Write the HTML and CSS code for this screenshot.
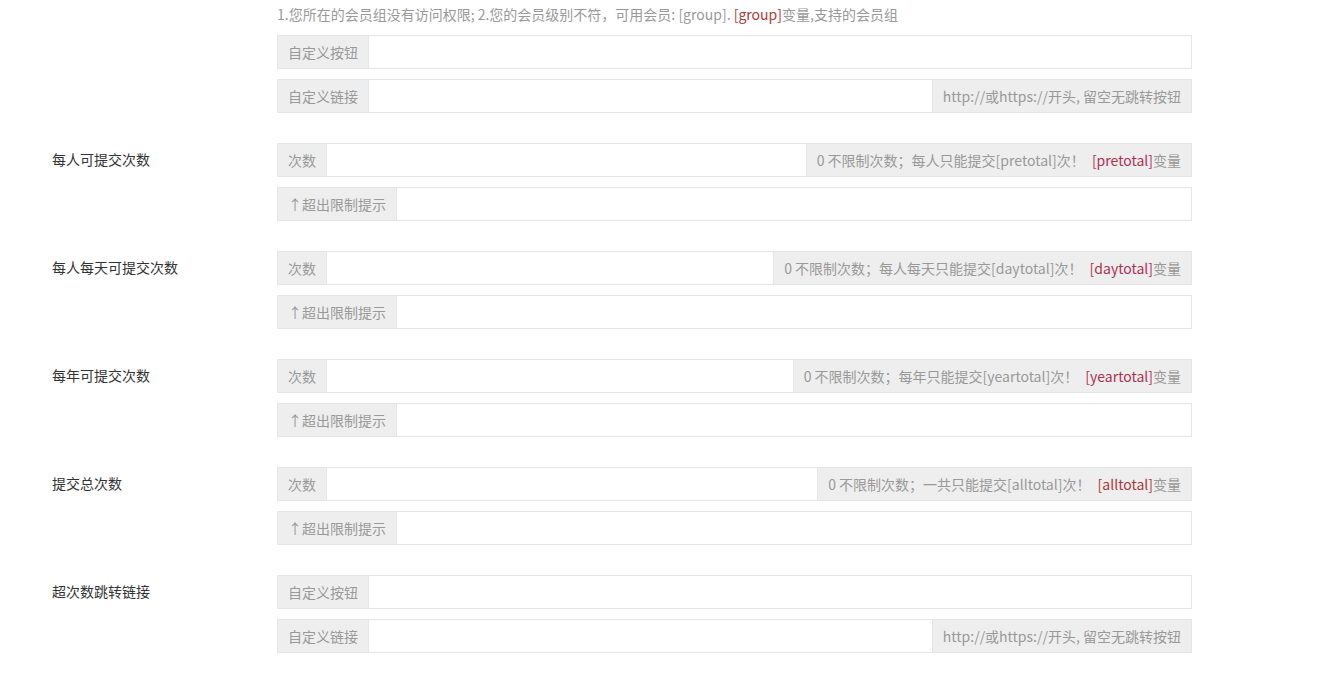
FILE: index.html
```html
<!DOCTYPE html>
<html lang="zh-CN">
<head>
    <meta charset="UTF-8">
    <title>表单设置</title>
    <link rel="stylesheet" href="styles.css">
</head>
<body>

    <div class="form">
        <div class="row">
            <div class="label"></div>
            <div class="field">
                <p class="help">1.您所在的会员组没有访问权限; 2.您的会员级别不符，可用会员: [group]. <span class="var-dark">[group]</span>变量,支持的会员组</p>
                <div class="group">
                    <span class="addon">自定义按钮</span>
                    <input type="text">
                </div>
                <div class="group">
                    <span class="addon">自定义链接</span>
                    <input type="text">
                    <span class="addon">http://或https://开头, 留空无跳转按钮</span>
                </div>
            </div>
        </div>

        <div class="row">
            <div class="label">每人可提交次数</div>
            <div class="field">
                <div class="group">
                    <span class="addon">次数</span>
                    <input type="text">
                    <span class="addon">0 不限制次数；每人只能提交[pretotal]次！&nbsp; <span class="var">[pretotal]</span>变量</span>
                </div>
                <div class="group">
                    <span class="addon">↑超出限制提示</span>
                    <input type="text">
                </div>
            </div>
        </div>

        <div class="row">
            <div class="label">每人每天可提交次数</div>
            <div class="field">
                <div class="group">
                    <span class="addon">次数</span>
                    <input type="text">
                    <span class="addon">0 不限制次数；每人每天只能提交[daytotal]次！&nbsp; <span class="var">[daytotal]</span>变量</span>
                </div>
                <div class="group">
                    <span class="addon">↑超出限制提示</span>
                    <input type="text">
                </div>
            </div>
        </div>

        <div class="row">
            <div class="label">每年可提交次数</div>
            <div class="field">
                <div class="group">
                    <span class="addon">次数</span>
                    <input type="text">
                    <span class="addon">0 不限制次数；每年只能提交[yeartotal]次！&nbsp; <span class="var">[yeartotal]</span>变量</span>
                </div>
                <div class="group">
                    <span class="addon">↑超出限制提示</span>
                    <input type="text">
                </div>
            </div>
        </div>

        <div class="row">
            <div class="label">提交总次数</div>
            <div class="field">
                <div class="group">
                    <span class="addon">次数</span>
                    <input type="text">
                    <span class="addon">0 不限制次数；一共只能提交[alltotal]次！&nbsp; <span class="var-dark">[alltotal]</span>变量</span>
                </div>
                <div class="group">
                    <span class="addon">↑超出限制提示</span>
                    <input type="text">
                </div>
            </div>
        </div>

        <div class="row">
            <div class="label">超次数跳转链接</div>
            <div class="field">
                <div class="group">
                    <span class="addon">自定义按钮</span>
                    <input type="text">
                </div>
                <div class="group">
                    <span class="addon">自定义链接</span>
                    <input type="text">
                    <span class="addon">http://或https://开头, 留空无跳转按钮</span>
                </div>
            </div>
        </div>
    </div>

</body>
</html>
```

FILE: styles.css
```css
body {
    margin: 0;
    font-family: "Microsoft YaHei", "Noto Sans CJK SC", sans-serif;
    font-size: 14px;
    color: #333;
    background: #fff;
}

.form {
    padding-top: 4px;
}

.row {
    display: flex;
    margin-bottom: 30px;
}

.label {
    width: 277px;
    flex-shrink: 0;
    padding-left: 52px;
    box-sizing: border-box;
    height: 33px;
    line-height: 33px;
    font-size: 14px;
    color: #333;
}

.field {
    width: 915px;
    display: flex;
    flex-direction: column;
    gap: 10px;
}

.help {
    margin: 0;
    height: 21px;
    line-height: 21px;
    font-size: 14px;
    color: #999;
}

.var {
    color: #b0304e;
}

.var-dark {
    color: #a93a3a;
}

.group {
    display: flex;
    height: 34px;
}

.addon {
    display: flex;
    align-items: center;
    padding: 0 10px;
    background: #eee;
    border: 1px solid #e6e6e6;
    color: #999;
    font-size: 14px;
    white-space: nowrap;
}

.addon .var,
.addon .var-dark {
    margin-left: 4px;
}

.group input {
    flex: 1;
    min-width: 0;
    height: 34px;
    box-sizing: border-box;
    border: 1px solid #e6e6e6;
    border-left: none;
    padding: 0 10px;
    font-family: inherit;
    font-size: 14px;
    outline: none;
}

.group input + .addon {
    border-left: none;
}
```
